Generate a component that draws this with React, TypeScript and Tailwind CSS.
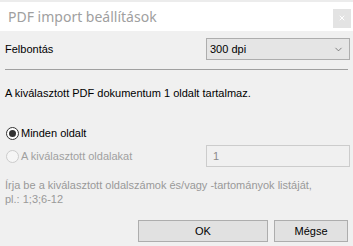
import { ChevronDown, X } from "lucide-react";

export default function App() {
  return (
    <div className="w-[353px] h-[246px] flex flex-col bg-[#f0f0f0] font-['Liberation_Sans',Arial,sans-serif] text-[11px] text-black overflow-hidden">
      {/* title bar */}
      <div className="h-[31px] bg-white border-t-2 border-[#ececec] flex items-center justify-between pl-[8px] pr-[2px] font-['Noto_Sans',sans-serif]">
        <span className="text-[14px] text-[#a0a0a0] leading-none">PDF import beállítások</span>
        <button className="w-[18px] h-[19px] bg-[#e3e3e3] flex items-center justify-center mt-[3px]">
          <X size={8} strokeWidth={3} className="text-white" />
        </button>
      </div>

      <div className="flex flex-col px-[5px]">
        {/* resolution */}
        <div className="flex items-center justify-between mt-[7px] h-[22px]">
          <span>Felbontás</span>
          <div className="w-[144px] h-[22px] mr-[-2px] bg-[#e5e5e5] border border-[#adadad] flex items-center justify-between pl-[3px] pr-[5px]">
            <span>300 dpi</span>
            <ChevronDown size={11} strokeWidth={1.5} className="text-[#555]" />
          </div>
        </div>

        <div className="h-px bg-[#a0a0a0] mt-[9px]" />

        <p className="mt-[15px] leading-[16px]">A kiválasztott PDF dokumentum 1 oldalt tartalmaz.</p>

        {/* radios */}
        <label className="flex items-center gap-[2px] mt-[24px] h-[16px]">
          <span className="w-[13px] h-[13px] rounded-full border border-[#333] bg-white flex items-center justify-center ml-[1px]">
            <span className="w-[7px] h-[7px] rounded-full bg-[#333]" />
          </span>
          <span>Minden oldalt</span>
        </label>
        <div className="flex items-center justify-between mt-[4px] h-[22px]">
          <label className="flex items-center gap-[2px] text-[#a0a0a0]">
            <span className="w-[13px] h-[13px] rounded-full border border-[#cccccc] bg-[#f6f6f6] ml-[1px]" />
            <span>A kiválasztott oldalakat</span>
          </label>
          <div className="w-[144px] h-[22px] mr-[-2px] border border-[#cccccc] bg-[#f0f0f0] flex items-center pl-[6px] text-[#8a8a8a]">
            1
          </div>
        </div>

        <p className="mt-[11px] text-[#999999] leading-[14px] whitespace-nowrap">
          Írja be a kiválasztott oldalszámok és/vagy -tartományok listáját,
          <br />
          pl.: 1;3;6-12
        </p>

        {/* buttons */}
        <div className="flex justify-end gap-[6px] mt-[14px]">
          <button className="w-[130px] h-[22px] bg-[#e1e1e1] border border-[#adadad]">OK</button>
          <button className="w-[74px] h-[22px] bg-[#e1e1e1] border border-[#adadad]">Mégse</button>
        </div>
      </div>
    </div>
  );
}
